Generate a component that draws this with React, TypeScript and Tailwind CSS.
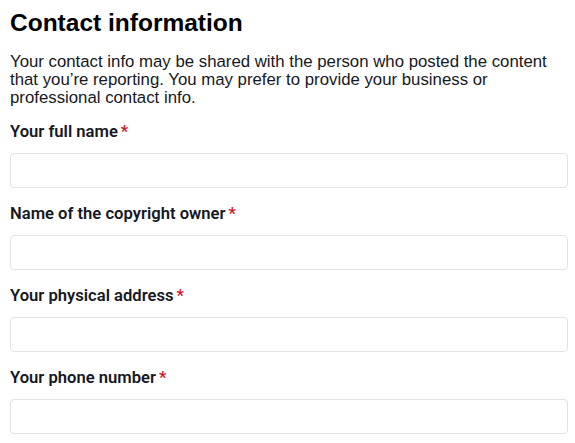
import { useState } from 'react';

const fields = [
  'Your full name',
  'Name of the copyright owner',
  'Your physical address',
  'Your phone number',
];

function Field({ label }: { label: string }) {
  const [value, setValue] = useState('');
  return (
    <div className="flex flex-col">
      <label
        className="text-[16.6px] leading-[20px] font-semibold text-[#161823]"
        style={{ fontFamily: 'Roboto, "Liberation Sans", Arial, sans-serif' }}
      >
        {label}
        <span className="ml-[3px] text-[#d3142c]">*</span>
      </label>
      <input
        value={value}
        onChange={(e) => setValue(e.target.value)}
        className="mt-[11px] h-[35px] w-full rounded-[4px] border border-[#e3e3e4] bg-white px-3 text-[15px] outline-none"
      />
    </div>
  );
}

export default function App() {
  return (
    <div
      className="min-h-screen bg-white pl-[10px] pr-[7px] pt-[8px] text-[#161823]"
      style={{ fontFamily: '"Liberation Sans", Arial, sans-serif' }}
    >
      <h2 className="text-[24.5px] leading-[30px] font-bold text-black">Contact information</h2>
      <p className="mt-[15px] text-[16.8px] leading-[18px] text-[#161823]">
        Your contact info may be shared with the person who posted the content that you’re reporting. You may prefer
        to provide your business or professional contact info.
      </p>
      <div className="mt-[15px] flex flex-col gap-[16px]">
        {fields.map((f) => (
          <Field key={f} label={f} />
        ))}
      </div>
    </div>
  );
}
